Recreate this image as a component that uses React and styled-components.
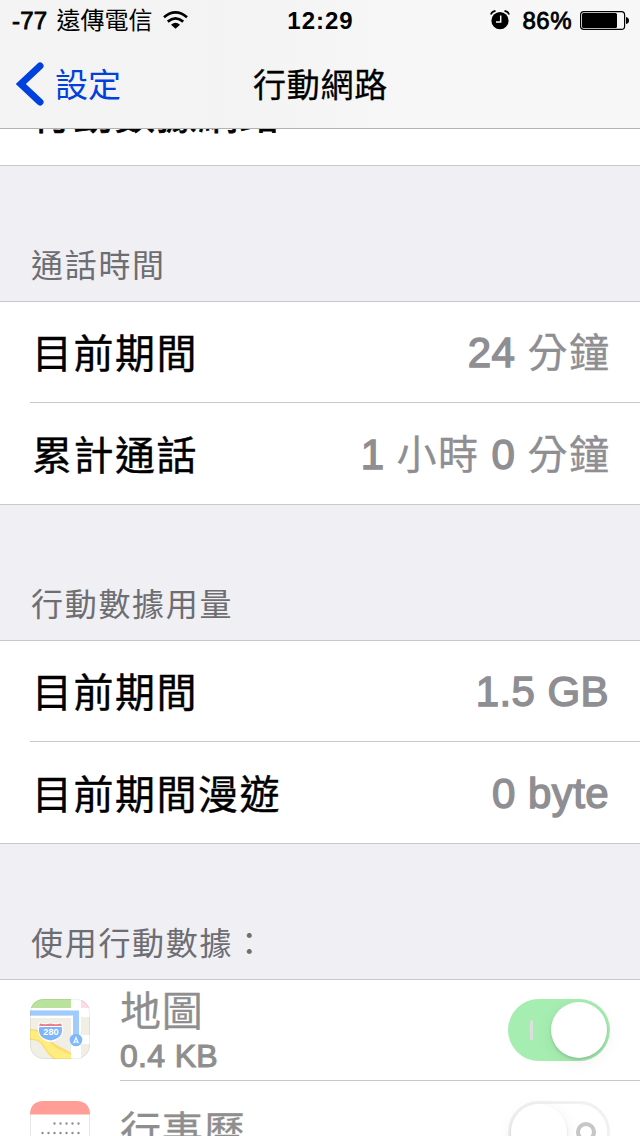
import React from 'react'
import styled, { createGlobalStyle } from 'styled-components'

const usage = [
  {
    title: '通話時間',
    rows: [
      { label: '目前期間', value: [['24 ', true], ['分鐘']] },
      { label: '累計通話', value: [['1 ', true], ['小時'], [' 0 ', true], ['分鐘']] },
    ],
  },
  {
    title: '行動數據用量',
    rows: [
      { label: '目前期間', value: [['1.5 GB', true]] },
      { label: '目前期間漫遊', value: [['0 byte', true]] },
    ],
  },
]

const MapsIcon = () => (
  <svg width="60" height="60" viewBox="0 0 60 60">
    <defs>
      <clipPath id="mapsClip">
        <rect width="60" height="60" rx="13.5" />
      </clipPath>
    </defs>
    <g clipPath="url(#mapsClip)">
      <rect width="60" height="60" fill="#f0eee5" />
      <rect width="41" height="9" fill="#b9e39c" />
      <rect x="51" width="9" height="9" fill="#fbdde4" />
      <path d="M0 9h60v2H0zM0 17h44v2H0zM51 9h9v9h-9zM41 0h10v60H41zM51 36h9v9h-9z" fill="#fff" />
      <path d="M0 30C9 30 15 33 20 40C26 48 33 48 41 54V64H30C22 59 18 56 14 49C10 42 7 41 0 41z" fill="#fbdc70" />
      <path d="M0 31.500C9 32 14 35 19 42C24 50 30 50 41 56V64H32C23 58 19 55 15 48C11 41 7 40 0 39.500z" fill="#ffed80" />
      <path d="M0 11.500h49v30h-6V16.500H0z" fill="#9fcbff" />
      <path d="M9 23.500Q15 25 20.500 23.500Q26 25 32 23.500Q34 28 33 32Q32 41 20.500 43Q9 41 8 32Q7 28 9 23.500z" fill="#fff" />
      <path d="M10 24.500Q15 26 20.500 24.500Q26 26 31 24.500L32 27H9z" fill="#e8818b" />
      <path d="M9.300 28h22.400Q34 39 20.500 41.500Q7 39 9.300 28z" fill="#7fb5fa" />
      <text x="21" y="36" fontSize="9.2" fontWeight="bold" fill="#fff" textAnchor="middle" fontFamily="Liberation Sans, sans-serif">280</text>
      <circle cx="46" cy="41" r="6.3" fill="#7eb9fb" />
      <path d="M46 37l3 7.500-3-1.300-3 1.300z" fill="#fff" />
      <path d="M46 40l1 2.500h-2z" fill="#7eb9fb" />
    </g>
    <rect x=".5" y=".5" width="59" height="59" rx="13" fill="none" stroke="#000" strokeOpacity=".06" />
  </svg>
)

const CalendarIcon = () => (
  <svg width="60" height="60" viewBox="0 0 60 60">
    <rect x=".5" y=".5" width="59" height="59" rx="13" fill="#fff" stroke="#e6e6e6" />
    <path d="M0 13.500C0 5 5 0 13.500 0h33C55 0 60 5 60 13.500z" fill="#ff9d97" />
    <g stroke="#8f8f8f" strokeWidth="2.400" strokeLinecap="round" strokeDasharray="0 6">
      <path d="M24.500 22.500H49" />
      <path d="M12.500 32H49" />
      <path d="M12.500 41.500H49" />
      <path d="M12.500 51H37" />
    </g>
  </svg>
)

const App = () => {
  return (
    <>
      <GlobalStyle />
      <Screen>
        <Header>
          <StatusBar>
            <StatusSide>
              <Latin>-77</Latin>
              <Carrier>遠傳電信</Carrier>
              <svg width="25" height="18" viewBox="0 0 25 18">
                <g fill="none" stroke="#000" strokeWidth="2.700">
                  <path d="M1 6.200Q12.500-3.400 24 6.200" />
                  <path d="M4.800 10.600Q12.500 4.100 20.200 10.600" />
                </g>
                <path d="M8 13.700Q12.500 10 17 13.700L12.500 17.800z" />
              </svg>
            </StatusSide>
            <Clock>12:29</Clock>
            <StatusSide $end>
              <svg width="20" height="20" viewBox="0 0 20 20">
                <circle cx="10" cy="10.700" r="8.600" />
                <path d="M.8 4.500Q2 1.500 5.500.900M19.200 4.500Q18 1.500 14.500.900" fill="none" stroke="#000" strokeWidth="1.600" />
                <path d="M10.700 5.500v6.400H6" fill="none" stroke="#f6f6f7" strokeWidth="1.500" />
              </svg>
              <Percent>86%</Percent>
              <svg width="49" height="19" viewBox="0 0 49 19">
                <rect x=".6" y=".6" width="44" height="17.800" rx="3.200" fill="none" stroke="#000" strokeWidth="1.200" />
                <rect x="2" y="2" width="35" height="15" rx="1.500" />
                <path d="M46 6q3 .5 3 3.500t-3 3.500z" />
              </svg>
            </StatusSide>
          </StatusBar>
          <NavBar>
            <BackButton>
              <svg width="28" height="44" viewBox="0 0 28 44">
                <path d="M24 4L4.800 22L24 40" fill="none" stroke="#0040dd" strokeWidth="7" strokeLinecap="round" />
              </svg>
              <span>設定</span>
            </BackButton>
            <Title>行動網路</Title>
          </NavBar>
        </Header>
        <ClippedRow>
          <Row $tall>
            <Label $bold>行動數據網路</Label>
          </Row>
        </ClippedRow>
        {usage.map((group) => (
          <section key={group.title}>
            <GroupTitle>{group.title}</GroupTitle>
            <Group>
              {group.rows.map((row, idx) => (
                <Row key={row.label} $tall={idx > 0} $divided={idx > 0}>
                  <Label>{row.label}</Label>
                  <Value>
                    {row.value.map(([text, latin], i) =>
                      latin ? <Latin key={i}>{text}</Latin> : <Han key={i}>{text}</Han>
                    )}
                  </Value>
                </Row>
              ))}
            </Group>
          </section>
        ))}
        <section>
          <GroupTitle>使用行動數據：</GroupTitle>
          <Group>
            <AppRow>
              <MapsIcon />
              <AppBody>
                <AppText>
                  <AppName>地圖</AppName>
                  <AppSize>0.4 KB</AppSize>
                </AppText>
                <Switch $on>
                  <Mark $on />
                  <Knob />
                </Switch>
              </AppBody>
            </AppRow>
            <AppRow $last>
              <CalendarIcon />
              <AppBody $last>
                <AppText>
                  <AppName>行事曆</AppName>
                </AppText>
                <Switch>
                  <Knob />
                  <Mark />
                </Switch>
              </AppBody>
            </AppRow>
          </Group>
        </section>
      </Screen>
    </>
  )
}

const GlobalStyle = createGlobalStyle`
  body {
    margin: 0;
    overflow: hidden;
    background: #efeff4;
    font-family: "Liberation Sans", "Noto Sans CJK TC", sans-serif;
  }
  svg {
    display: block;
    flex: none;
  }
`

const Screen = styled.main`
  width: 640px;
  height: 1136px;
  overflow: hidden;
  color: #000;
`

const Header = styled.header`
  height: 128px;
  background: linear-gradient(90deg, #f4f4f4, #f3f3f3 35%, #f7f7f8 65%, #f7f7f7);
  border-bottom: 1px solid #b2b2b2;
`

const StatusBar = styled.div`
  box-sizing: border-box;
  display: grid;
  grid-template-columns: 1fr auto 1fr;
  align-items: center;
  height: 40px;
  padding: 0 11px 0 12px;
  font-size: 24px;
  line-height: 38px;

  span {
    padding-top: 2px;
  }
`

const StatusSide = styled.div`
  display: flex;
  align-items: center;
  justify-content: ${(p) => (p.$end ? 'flex-end' : 'flex-start')};
`

const Latin = styled.span`
  -webkit-text-stroke: 0.034em currentColor;
  letter-spacing: ${(p) => p.$spacing || '0.01em'};
  white-space: pre;
`

const Han = styled.span`
  font-size: 40px;
  letter-spacing: 1.5px;
  -webkit-text-stroke: 0.3px currentColor;

  &:last-child {
    margin-right: -1.500px;
  }
`

const Carrier = styled.span`
  margin: 0 11px 0 9px;
`

const Clock = styled.span`
  font-weight: bold;
  letter-spacing: 1px;
`

const Percent = styled(Latin)`
  margin: 0 8px 0 12px;
  letter-spacing: 0.5px;
`

const NavBar = styled.nav`
  display: grid;
  grid-template-columns: 1fr auto 1fr;
  align-items: center;
  height: 88px;
  padding: 0 15px 0 16px;
`

const BackButton = styled.a`
  display: flex;
  align-items: center;
  gap: 11px;
  color: #0040dd;
  font-size: 33px;
  line-height: 44px;

  span {
    padding-top: 4px;
  }
`

const Title = styled.h1`
  margin: 0;
  padding-top: 4px;
  font-size: 33px;
  font-weight: normal;
  line-height: 44px;
  letter-spacing: 0.7px;
  -webkit-text-stroke: 0.3px currentColor;
`

const ClippedRow = styled.div`
  display: flex;
  flex-direction: column;
  justify-content: flex-end;
  height: 36px;
  overflow: hidden;
  background: #fff;
  border-bottom: 1px solid #c8c7cc;
`

const GroupTitle = styled.h2`
  box-sizing: border-box;
  height: 135px;
  margin: 0;
  padding: 76px 31px 0;
  color: #6d6d72;
  font-size: 32px;
  font-weight: normal;
  line-height: 48px;
  letter-spacing: 1.7px;
`

const Group = styled.div`
  background: #fff;
  border: solid #c8c7cc;
  border-width: 1px 0;
`

const Row = styled.div`
  flex: none;
  display: flex;
  align-items: center;
  justify-content: space-between;
  height: ${(p) => (p.$tall ? '101px' : '100px')};
  margin-left: 30px;
  padding: 0 31px 0 2px;
  border-top: ${(p) => (p.$divided ? '1px solid #c8c7cc' : '0')};
  font-size: 42px;
  line-height: 60px;
`

const Label = styled.span`
  padding-top: ${(p) => (p.$bold ? '0' : '4px')};
  font-size: 40px;
  letter-spacing: 1.5px;
  -webkit-text-stroke: ${(p) => (p.$bold ? '0.8px' : '0.4px')} currentColor;
`

const Value = styled.span`
  padding-top: 2px;
  color: #8e8e93;
  white-space: nowrap;
`

const AppRow = styled.div`
  display: flex;
  align-items: center;
  gap: 30px;
  height: 101px;
  padding-left: 30px;

  > svg {
    margin-top: ${(p) => (p.$last ? '-1px' : '-4px')};
  }
`

const AppBody = styled.div`
  box-sizing: border-box;
  flex: 1;
  display: flex;
  align-items: center;
  justify-content: space-between;
  height: 101px;
  padding-right: 30px;
  border-bottom: ${(p) => (p.$last ? '0' : '1px solid #c8c7cc')};
`

const AppText = styled.div`
  display: flex;
  flex-direction: column;
  padding-top: 1px;
  color: #8e8e8e;
`

const AppName = styled.span`
  font-size: 41px;
  line-height: 50px;
  letter-spacing: 0.7px;
  -webkit-text-stroke: 0.3px currentColor;
`

const AppSize = styled(Latin)`
  font-size: 32px;
  line-height: 38px;
`

const Switch = styled.div`
  box-sizing: border-box;
  display: flex;
  align-items: center;
  justify-content: space-between;
  width: 102px;
  height: 62px;
  padding: ${(p) => (p.$on ? '0 3px 0 22px' : '0 11px 0 0')};
  border: ${(p) => (p.$on ? '0' : '3px solid #f1f1f1')};
  border-radius: 31px;
  background: ${(p) => (p.$on ? '#a5edb1' : '#fff')};
`

const Knob = styled.div`
  width: 56px;
  height: 56px;
  border-radius: 50%;
  background: #fff;
  box-shadow: 0 2px 3px rgba(0, 0, 0, 0.14), 0 4px 18px rgba(0, 0, 0, 0.06);
`

const Mark = styled.div`
  box-sizing: border-box;
  width: ${(p) => (p.$on ? '3px' : '20px')};
  height: 20px;
  border: ${(p) => (p.$on ? '0' : '4px solid #c6c6c6')};
  border-radius: ${(p) => (p.$on ? '2px' : '50%')};
  background: ${(p) => (p.$on ? '#dedede' : 'transparent')};
`

export default App
